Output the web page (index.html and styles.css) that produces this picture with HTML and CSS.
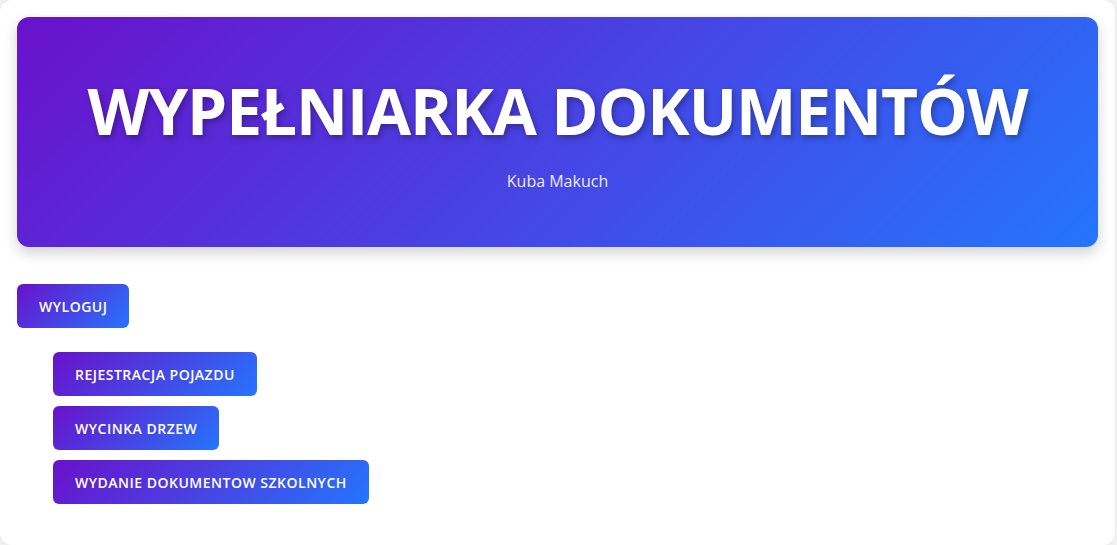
FILE: index.html
```html
<!DOCTYPE html>
<html lang="pl">
<head>
<meta charset="utf-8">
<title>Wypełniarka dokumentów</title>
<link rel="stylesheet" href="styles.css">
</head>
<body>
<div class="card">
  <header class="hero">
    <h1 class="hero-title">WYPEŁNIARKA DOKUMENTÓW</h1>
    <p class="hero-sub">Kuba Makuch</p>
  </header>
  <div class="actions">
    <button class="btn">Wyloguj</button>
  </div>
  <ul class="menu">
    <li><button class="btn">Rejestracja pojazdu</button></li>
    <li><button class="btn">Wycinka drzew</button></li>
    <li><button class="btn">Wydanie dokumentow szkolnych</button></li>
  </ul>
</div>
</body>
</html>
```
FILE: styles.css
```css
* { box-sizing: border-box; }
html, body { margin: 0; padding: 0; }
body {
  background: #f3f3f4;
  font-family: "Open Sans", "Noto Sans", sans-serif;
  height: 545px;
  overflow: hidden;
}
.card {
  background: #ffffff;
  width: 1115px;
  height: 545px;
  border-radius: 12px;
  padding: 17px;
  box-shadow: 0 0 6px rgba(0,0,0,0.06);
}
.hero {
  height: 230px;
  border-radius: 12px;
  background: linear-gradient(135deg, #6a11cb 0%, #2575fc 100%);
  box-shadow: 0 6px 14px rgba(0,0,0,0.18);
  color: #fff;
  text-align: center;
  display: flex;
  flex-direction: column;
  align-items: center;
  padding-top: 54px;
}
.hero-title {
  margin: 0;
  font-size: 64px;
  font-weight: 700;
  line-height: 80px;
  letter-spacing: -1.1px;
  text-shadow: 2px 3px 6px rgba(0,0,0,0.3);
}
.hero-sub {
  margin: 19px 0 0;
  font-size: 16px;
  line-height: 22px;
  color: rgba(255,255,255,0.92);
}
.actions {
  margin-top: 37px;
}
.btn {
  border: none;
  border-radius: 6px;
  background: linear-gradient(135deg, #6a11cb 0%, #2575fc 100%);
  color: #fff;
  font-family: "Open Sans", "Noto Sans", sans-serif;
  font-size: 14px;
  font-weight: 600;
  text-transform: uppercase;
  letter-spacing: 0.5px;
  height: 44px;
  padding: 0 22px;
  cursor: pointer;
}
.menu {
  list-style: none;
  margin: 24px 0 0;
  padding: 0 0 0 36px;
  display: flex;
  flex-direction: column;
  align-items: flex-start;
  gap: 10px;
}
.menu li { display: block; }
```
